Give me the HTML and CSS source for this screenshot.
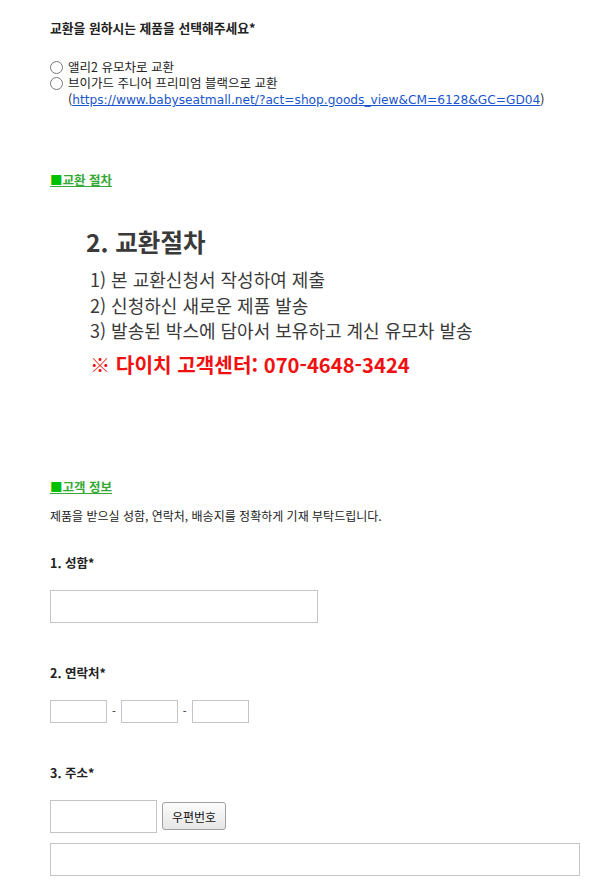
FILE: index.html
```html
<!DOCTYPE html>
<html lang="ko">

<head>
    <meta charset="UTF-8">
    <meta name="viewport" content="width=device-width, initial-scale=1.0">
    <title>교환신청서</title>
    <link rel="stylesheet" href="styles.css">
</head>

<body>
    <div class="form">
        <p class="q-title">교환을 원하시는 제품을 선택해주세요*</p>

        <div class="options">
            <label class="opt">
                <input type="radio" name="product">
                <span>앨리2 유모차로 교환</span>
            </label>
            <label class="opt">
                <input type="radio" name="product">
                <span>브이가드 주니어 프리미엄 블랙으로 교환<br>(<a href="#">https://www.babyseatmall.net/?act=shop.goods_view&amp;CM=6128&amp;GC=GD04</a>)</span>
            </label>
        </div>

        <a class="sec-link sec-1" href="#"><span class="sq">■</span>교환 절차</a>

        <div class="steps">
            <h2>2. 교환절차</h2>
            <p>1) 본 교환신청서 작성하여 제출</p>
            <p>2) 신청하신 새로운 제품 발송</p>
            <p>3) 발송된 박스에 담아서 보유하고 계신 유모차 발송</p>
            <p class="call">※ 다이치 고객센터: 070-4648-3424</p>
        </div>

        <a class="sec-link sec-2" href="#"><span class="sq">■</span>고객 정보</a>
        <p class="desc">제품을 받으실 성함, 연락처, 배송지를 정확하게 기재 부탁드립니다.</p>

        <div class="field first">
            <p class="label">1. 성함*</p>
            <input type="text" class="in-name">
        </div>

        <div class="field">
            <p class="label">2. 연락처*</p>
            <div class="phone">
                <input type="text" class="in-tel">
                <span>-</span>
                <input type="text" class="in-tel">
                <span>-</span>
                <input type="text" class="in-tel">
            </div>
        </div>

        <div class="field">
            <p class="label">3. 주소*</p>
            <div class="zip">
                <input type="text" class="in-zip">
                <button type="button">우편번호</button>
            </div>
            <input type="text" class="in-addr">
        </div>
    </div>
</body>

</html>
```

FILE: styles.css
```css
body {
    margin: 0;
    font-family: "Noto Sans CJK KR", "DejaVu Sans", sans-serif;
    color: #222;
    background: #fff;
}

.form {
    padding: 19px 0 0 50px;
}

.q-title {
    margin: 0;
    font-size: 12.8px;
    font-weight: bold;
    line-height: 18px;
}

.options {
    margin-top: 22px;
}

.opt {
    display: flex;
    align-items: flex-start;
    font-size: 12.5px;
    line-height: 16px;
}

.opt input {
    margin: 2px 5px 0 0;
    width: 13px;
    height: 13px;
}

.opt a {
    font-family: "DejaVu Sans", sans-serif;
    font-size: 12.2px;
    color: #1a55cc;
}

.sec-link {
    display: block;
    width: max-content;
    font-size: 12.5px;
    font-weight: bold;
    line-height: 16px;
    color: #33a833;
}

.sq {
    color: #00c000;
}

.sec-1 {
    margin-top: 64px;
}

.steps {
    margin: 39px 0 0 36px;
    color: #3a3a3a;
}

.steps h2 {
    margin: 0 0 10px 0;
    font-size: 24.5px;
    line-height: 30px;
}

.steps p {
    margin: 0 0 0 4px;
    font-size: 18px;
    line-height: 25.5px;
}

.steps .call {
    margin-top: 8px;
    color: #f01010;
    font-size: 20.2px;
    font-weight: bold;
    line-height: 26px;
}

.sec-2 {
    margin-top: 101px;
}

.desc {
    margin: 13px 0 0 0;
    font-size: 12px;
    line-height: 16px;
}

.field {
    margin-top: 41px;
}

.field.first {
    margin-top: 30px;
}

.label {
    margin: 0 0 18px 0;
    font-size: 12.5px;
    font-weight: bold;
    line-height: 18px;
}

input[type="text"] {
    box-sizing: border-box;
    border: 1px solid #c4c4c4;
    margin: 0;
    display: block;
}

.in-name {
    width: 268px;
    height: 33px;
}

.phone {
    display: flex;
    align-items: center;
    gap: 5px;
    font-size: 11px;
}

.in-tel {
    width: 57px;
    height: 23px;
}

.zip {
    display: flex;
    align-items: center;
    gap: 5px;
    margin-top: 2px;
}

.in-zip {
    width: 107px;
    height: 33px;
}

.zip button {
    height: 28px;
    padding: 0 9px;
    font-family: "Noto Sans CJK KR", sans-serif;
    font-size: 12px;
    background: linear-gradient(#fcfcfc, #e6e6e6);
    border: 1px solid #a0a0a0;
    border-radius: 3px;
    color: #111;
}

.in-addr {
    margin-top: 10px !important;
    width: 530px;
    height: 33px;
}
```
